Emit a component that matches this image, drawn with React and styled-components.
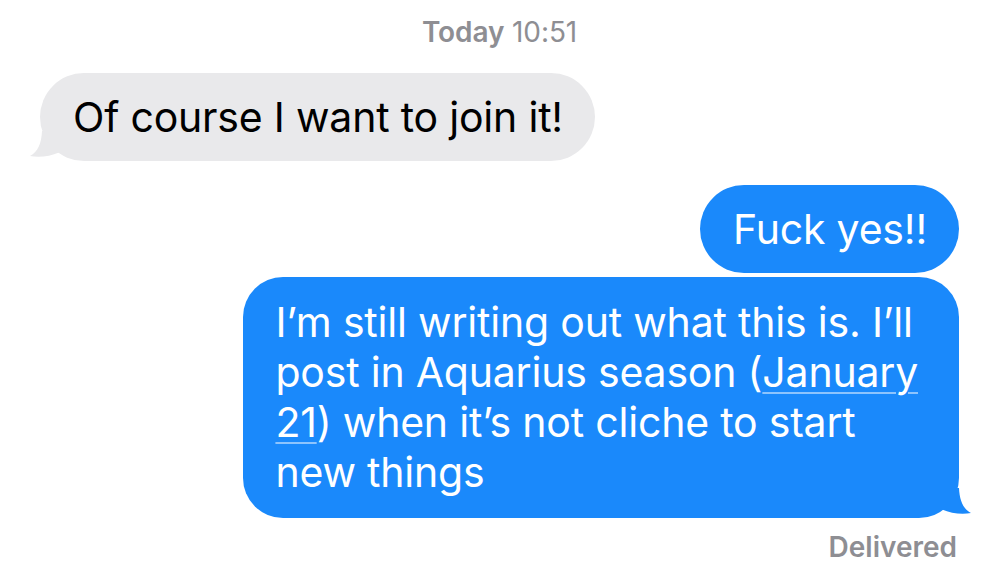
import React from "react";
import styled, { createGlobalStyle, css } from "styled-components";

const GlobalStyle = createGlobalStyle`
  html, body {
    margin: 0;
    padding: 0;
    background: #ffffff;
  }
  body {
    font-family: Inter, "Noto Sans", "Liberation Sans", sans-serif;
    -webkit-font-smoothing: antialiased;
  }
`;

const Screen = styled.div`
  width: 1000px;
  height: 577px;
  box-sizing: border-box;
  padding: 14px 41px 0 40px;
  display: flex;
  flex-direction: column;
  overflow: hidden;
`;

const Timestamp = styled.div`
  text-align: center;
  color: #8e8e93;
  font-size: 28px;
  line-height: 36px;
  font-weight: 400;
  letter-spacing: -0.1px;
  margin-bottom: 23px;

  b {
    font-weight: 600;
  }
`;

const Row = styled.div`
  display: flex;
  justify-content: ${(p) => (p.$side === "right" ? "flex-end" : "flex-start")};
  margin-top: ${(p) => p.$gap || 0}px;
`;

const BubbleBox = styled.div`
  position: relative;
  box-sizing: border-box;
  font-size: 41px;
  line-height: 50px;
  letter-spacing: -0.2px;
  white-space: nowrap;
  padding: ${(p) => (p.$multi ? "20px 41px 21px 32px" : "19px 32px 19px 33px")};
  border-radius: ${(p) => (p.$multi ? 40 : 44)}px;
  ${(p) =>
    p.$variant === "out"
      ? css`
          background: #1a89fb;
          color: #ffffff;
        `
      : css`
          background: #e9e9eb;
          color: #000000;
        `}
`;

const TailSvg = styled.svg`
  position: absolute;
  bottom: 0;
  width: 30px;
  height: 30px;
  ${(p) =>
    p.$side === "right"
      ? css`
          right: -13px;
          transform: scaleX(-1);
        `
      : css`
          left: -11px;
        `}
`;

const Link = styled.span`
  text-decoration: underline;
  text-decoration-color: rgba(255, 255, 255, 0.5);
  text-decoration-thickness: 2px;
  text-underline-offset: 5px;
`;

const Status = styled.div`
  align-self: flex-end;
  margin-top: 12px;
  margin-right: 2px;
  color: #8e8e93;
  font-size: 28px;
  line-height: 34px;
  font-weight: 600;
`;

function Tail({ side, color }) {
  return (
    <TailSvg $side={side} viewBox="0 0 30 30" aria-hidden="true">
      <path
        d="M13 0 C12.5 12, 9 21, 1 25 C10 26.5, 21 25.5, 30 21.5 L30 0 Z"
        fill={color}
      />
    </TailSvg>
  );
}

function Bubble({ variant, tail, multi, children }) {
  return (
    <BubbleBox $variant={variant} $multi={multi}>
      {children}
      {tail && (
        <Tail
          side={variant === "out" ? "right" : "left"}
          color={variant === "out" ? "#1a89fb" : "#e9e9eb"}
        />
      )}
    </BubbleBox>
  );
}

export default function App() {
  return (
    <>
      <GlobalStyle />
      <Screen>
        <Timestamp>
          <b>Today</b> 10:51
        </Timestamp>
        <Row $side="left">
          <Bubble variant="in" tail>
            Of course I want to join it!
          </Bubble>
        </Row>
        <Row $side="right" $gap={24}>
          <Bubble variant="out">Fuck yes!!</Bubble>
        </Row>
        <Row $side="right" $gap={4}>
          <Bubble variant="out" tail multi>
            I’m still writing out what this is. I’ll
            <br />
            post in Aquarius season (<Link>January</Link>
            <br />
            <Link>21</Link>) when it’s not cliche to start
            <br />
            new things
          </Bubble>
        </Row>
        <Status>Delivered</Status>
      </Screen>
    </>
  );
}
